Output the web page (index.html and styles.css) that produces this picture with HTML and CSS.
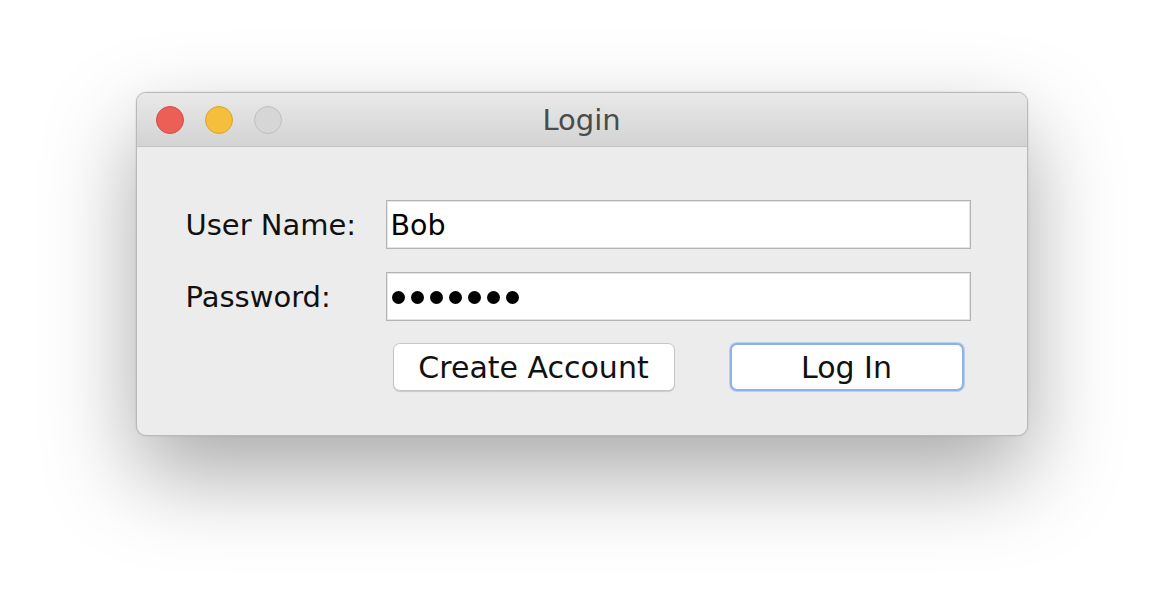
FILE: index.html
```html
<!DOCTYPE html>
<html>
<head>
<meta charset="utf-8">
<title>Login</title>
<link rel="stylesheet" href="styles.css">
</head>
<body>
<div class="stage">
  <div class="window">
    <div class="titlebar">
      <div class="lights">
        <span class="light red"></span>
        <span class="light yellow"></span>
        <span class="light gray"></span>
      </div>
      <div class="title">Login</div>
    </div>
    <div class="content">
      <div class="form">
        <label class="label">User Name:</label>
        <div class="field"><span class="value">Bob</span></div>
        <label class="label">Password:</label>
        <div class="field"><span class="dots"><i></i><i></i><i></i><i></i><i></i><i></i><i></i></span></div>
      </div>
      <div class="buttons">
        <button class="btn create">Create Account</button>
        <button class="btn login">Log In</button>
      </div>
    </div>
  </div>
</div>
</body>
</html>
```
FILE: styles.css
```css
html, body {
  margin: 0;
  padding: 0;
  background: #ffffff;
}
body {
  font-family: "DejaVu Sans", "Liberation Sans", sans-serif;
  width: 1162px;
  height: 616px;
  overflow: hidden;
}
.stage {
  padding-top: 92px;
  display: flex;
  justify-content: center;
  padding-left: 1px;
}
.window {
  width: 892px;
  height: 344px;
  box-sizing: border-box;
  border: 1px solid #b9b9b9;
  border-radius: 10px;
  background: #ececec;
  box-shadow: 0 38px 90px rgba(0, 0, 0, 0.34), 0 0 2px rgba(0,0,0,0.15);
  display: flex;
  flex-direction: column;
  overflow: hidden;
}
.titlebar {
  height: 53px;
  flex: none;
  background: linear-gradient(#e9e9e9, #d3d3d3);
  border-bottom: 1px solid #c2c2c2;
  display: flex;
  align-items: center;
  position: relative;
}
.lights {
  display: flex;
  gap: 21px;
  padding-left: 19px;
  padding-top: 1px;
}
.light {
  width: 28px;
  height: 28px;
  border-radius: 50%;
  box-sizing: border-box;
}
.red { background: #ec5f57; border: 1px solid #d54b43; }
.yellow { background: #f5be3c; border: 1px solid #dda42c; }
.gray { background: #d6d6d6; border: 1px solid #bfbfbf; }
.title {
  position: absolute;
  left: 0;
  right: 0;
  top: 10px;
  text-align: center;
  font-size: 29px;
  color: #4b4b4b;
  padding-left: 0;
}
.content {
  padding: 53px 56px 0 49px;
}
.form {
  display: grid;
  grid-template-columns: 200px 1fr;
  row-gap: 23px;
  align-items: center;
}
.label {
  font-size: 29px;
  color: #111;
  padding-top: 1px;
}
.field {
  height: 49px;
  box-sizing: border-box;
  background: #fff;
  border: 1px solid #b4b4b4;
  box-shadow: inset 0 0 0 1px #e4e4e4;
  display: flex;
  align-items: center;
  padding-left: 4px;
}
.value {
  font-size: 28.5px;
  color: #000;
  padding-top: 2px;
}
.dots {
  display: flex;
  gap: 6px;
  padding-left: 1px;
  padding-top: 1px;
}
.dots i {
  width: 13px;
  height: 13px;
  border-radius: 50%;
  background: #000;
}
.buttons {
  display: flex;
  justify-content: space-between;
  padding: 22px 7px 0 207px;
}
.btn {
  font-family: "DejaVu Sans", "Liberation Sans", sans-serif;
  font-size: 30px;
  color: #111;
  background: #fff;
  height: 48px;
  box-sizing: border-box;
  border-radius: 7px;
  padding: 0;
}
.create {
  width: 282px;
  border: 1px solid #c6c6c6;
  box-shadow: 0 1px 1px rgba(0,0,0,0.15);
}
.login {
  width: 234px;
  border: 2px solid #8db2e8;
  box-shadow: 0 0 0 1px #b9cfee;
}
```
